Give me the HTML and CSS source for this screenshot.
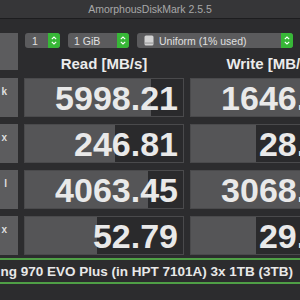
FILE: index.html
```html
<!DOCTYPE html>
<html>
<head>
<meta charset="utf-8">
<link rel="stylesheet" href="styles.css">
</head>
<body>
<div class="titlebar">AmorphousDiskMark 2.5.5</div>
<div class="main">
  <div class="top">
    <div class="allbtn"></div>
    <div class="topright">
      <div class="controls">
        <div class="popup p1"><span class="ptext">1</span><span class="stepper"><svg width="12" height="15" viewBox="0 0 12 15"><polyline points="3.8,6.2 6,4 8.2,6.2" fill="none" stroke="#fff" stroke-width="1.1"/><polyline points="3.8,8.8 6,11 8.2,8.8" fill="none" stroke="#fff" stroke-width="1.1"/></svg></span></div>
        <div class="popup p2"><span class="ptext">1 GiB</span><span class="stepper"><svg width="12" height="15" viewBox="0 0 12 15"><polyline points="3.8,6.2 6,4 8.2,6.2" fill="none" stroke="#fff" stroke-width="1.1"/><polyline points="3.8,8.8 6,11 8.2,8.8" fill="none" stroke="#fff" stroke-width="1.1"/></svg></span></div>
        <div class="popup p3"><svg class="disk" width="10" height="11" viewBox="0 0 10 11"><rect x="0.5" y="0.5" width="9" height="10" rx="1.5" fill="#d2d2d2"/><rect x="0.5" y="7.6" width="9" height="0.9" fill="#8a8a8a"/></svg><span class="ptext">Uniform (1% used)</span><span class="stepper"><svg width="12" height="15" viewBox="0 0 12 15"><polyline points="3.8,6.2 6,4 8.2,6.2" fill="none" stroke="#fff" stroke-width="1.1"/><polyline points="3.8,8.8 6,11 8.2,8.8" fill="none" stroke="#fff" stroke-width="1.1"/></svg></span></div>
      </div>
      <div class="heads">
        <div class="head">Read [MB/s]</div>
        <div class="head">Write [MB/s]</div>
      </div>
    </div>
  </div>
  <div class="results">
    <div class="label">k</div>
    <div class="box" style="--w:80%">5998.21</div>
    <div class="box" style="--w:71%">1646.53</div>

    <div class="label">x</div>
    <div class="box" style="--w:57%">246.81</div>
    <div class="box" style="--w:41%">28.94</div>

    <div class="label">l</div>
    <div class="box" style="--w:78%">4063.45</div>
    <div class="box" style="--w:75%">3068.12</div>

    <div class="label">x</div>
    <div class="box" style="--w:45.5%">52.79</div>
    <div class="box" style="--w:41%">29.37</div>
  </div>
</div>
<div class="status"><span>Samsung 970 EVO Plus (in HPT 7101A) 3x 1TB (3TB)</span></div>
</body>
</html>
```
FILE: styles.css
```css
html, body {
  margin: 0;
  padding: 0;
}
body {
  width: 300px;
  height: 300px;
  overflow: hidden;
  background: #2c2c2e;
  font-family: "Liberation Sans", Arial, sans-serif;
}
.titlebar {
  height: 18px;
  line-height: 18px;
  background: #363638;
  border-bottom: 1px solid #1d1d1f;
  color: #a8a8a8;
  font-size: 10.5px;
  text-align: center;
}
.main {
  padding-top: 14px;
}
.top {
  display: flex;
  gap: 6px;
}
.allbtn {
  width: 18px;
  height: 37px;
  flex: none;
  background: #5c5c5e;
}
.topright {
  display: flex;
  flex-direction: column;
  flex: 1;
}
.controls {
  display: flex;
  gap: 8px;
  margin-left: 1px;
  height: 15px;
}
.popup {
  display: flex;
  align-items: center;
  height: 15px;
  background: #5b5b5d;
  border-radius: 3px;
  overflow: hidden;
  color: #e0e0e0;
  font-size: 10.5px;
  flex: none;
}
.p1 { width: 35px; }
.p2 { width: 61px; }
.p3 { width: 156px; }
.ptext {
  flex: 1;
  padding-left: 7px;
  white-space: nowrap;
}
.p2 .ptext { padding-left: 6px; }
.p3 .ptext { padding-left: 5px; }
.disk {
  margin-left: 7px;
  flex: none;
}
.stepper {
  width: 12px;
  height: 15px;
  flex: none;
  background: #37b737;
  display: flex;
}
.heads {
  display: flex;
  gap: 6px;
  margin-top: 8px;
}
.head {
  width: 160px;
  flex: none;
  text-align: center;
  font-weight: bold;
  font-size: 15px;
  line-height: 15px;
  color: #ebebeb;
  white-space: nowrap;
}
.results {
  display: grid;
  grid-template-columns: 18px 160px 160px;
  grid-auto-rows: 39px;
  column-gap: 6px;
  row-gap: 7px;
  margin-top: 7px;
}
.label {
  background: #5c5c5e;
  overflow: hidden;
  color: #dedede;
  font-weight: bold;
  font-size: 10px;
  line-height: 10px;
  text-align: right;
  padding: 9px 11px 0 0;
  white-space: nowrap;
}
.box {
  box-sizing: border-box;
  border: 1px solid #4a4a4c;
  background: linear-gradient(to right, #555557 var(--w), #2a2a2c var(--w));
  display: flex;
  align-items: center;
  justify-content: flex-end;
  padding-right: 5px;
  color: #e9e9e9;
  font-weight: bold;
  font-size: 34px;
  line-height: 34px;
  white-space: nowrap;
}
.status {
  margin-top: 3px;
  height: 22px;
  border-top: 2px solid #4f9f46;
  border-bottom: 2px solid #4f9f46;
  display: flex;
  justify-content: flex-end;
  align-items: center;
  padding-right: 7px;
  overflow: hidden;
  white-space: nowrap;
  color: #e8e8e8;
  font-weight: bold;
  font-size: 13.5px;
}
.status span {
  flex: none;
}
```
